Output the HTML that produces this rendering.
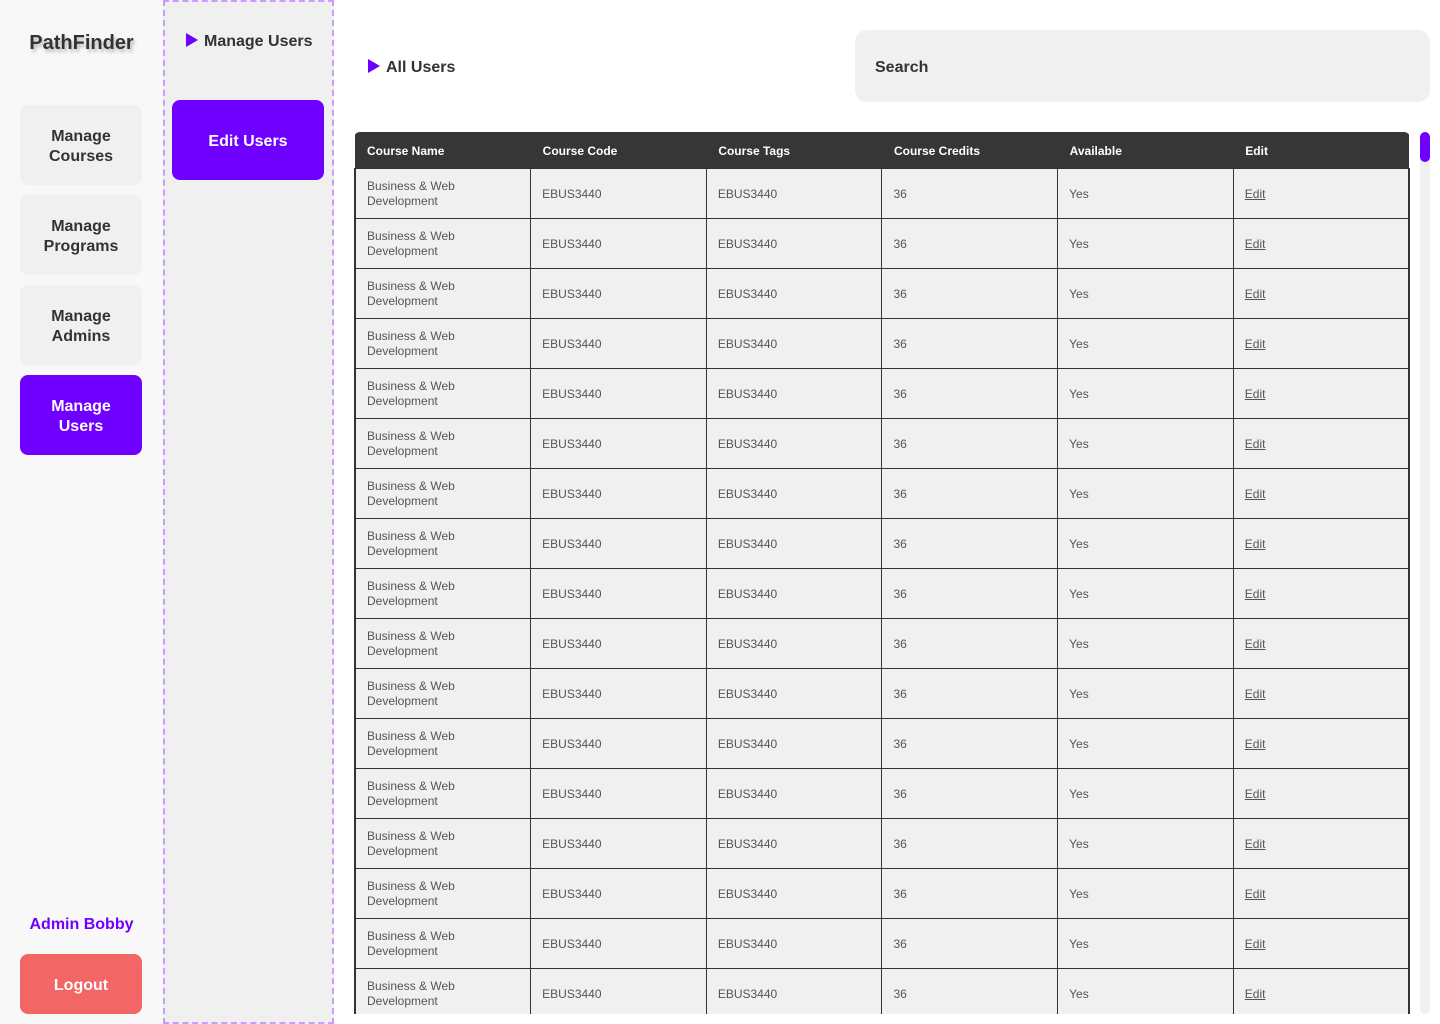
<!DOCTYPE html>
<html><head><meta charset="utf-8"><style>
*{margin:0;padding:0;box-sizing:border-box}
body{width:1440px;height:1024px;overflow:hidden;background:#fff;font-family:"Liberation Sans",sans-serif;color:#333;position:relative}
.side{position:absolute;left:0;top:0;width:163px;height:1024px;background:#f8f8f8}
.logo{position:absolute;left:0;width:163px;top:32px;text-align:center;font-weight:bold;font-size:20px;color:#333;text-shadow:2px 3px 3px rgba(0,0,0,.25)}
.nb{position:absolute;left:20px;width:122px;height:80px;border-radius:8px;background:#f0f0f0;display:flex;align-items:center;justify-content:center;text-align:center;font-weight:bold;font-size:16px;line-height:20px;color:#333;padding-top:3px}
.nb.act{background:#6f00ff;color:#fff}
.admin{position:absolute;left:0;width:163px;top:916px;text-align:center;color:#7000ff;font-weight:bold;font-size:16px}
.logout{position:absolute;left:20px;top:954px;width:122px;height:60px;border-radius:8px;background:#f36666;color:#fff;font-weight:bold;font-size:16px;display:flex;align-items:center;justify-content:center;padding-top:3px}
.panel{position:absolute;left:163px;top:0;width:171px;height:1024px;background:#f0f0f0;border:2px dashed #c99cff}
.tri{display:inline-block;width:0;height:0;border-top:7px solid transparent;border-bottom:7px solid transparent;border-left:12px solid #6f00ff;vertical-align:-1px;margin-right:6px}
.ph{position:absolute;left:186px;top:33px;font-weight:bold;font-size:16px}
.edit{position:absolute;left:172px;top:100px;width:152px;height:80px;border-radius:8px;background:#6f00ff;color:#fff;font-weight:bold;font-size:16px;display:flex;align-items:center;justify-content:center;padding-top:3px}
.all{position:absolute;left:368px;top:59px;font-weight:bold;font-size:16px}
.search{position:absolute;left:855px;top:30px;width:575px;height:72px;border-radius:12px;background:#f0f0f0;font-weight:bold;font-size:16px;padding:29px 20px;color:#333}
.tw{position:absolute;left:354px;top:132px;width:1056px;height:882px;overflow:hidden;border-radius:6px 6px 0 0}
table{border-collapse:collapse;width:1056px;table-layout:fixed}
th{background:#363636;color:#fff;font-size:12px;font-weight:bold;text-align:left;height:36px;padding:2px 12px 0}
td{background:#f0f0f0;border:1px solid #333;height:50px;font-size:12px;color:#555;padding:2px 11px 0;line-height:15px}
tr td:first-child{border-left:2px solid #333}
tr td:last-child{border-right:2px solid #333}
td u{color:#555}
.sb{position:absolute;left:1420px;top:132px;width:10px;height:882px;border-radius:5px;background:#f0f0f0}
.th{position:absolute;left:1420px;top:132px;width:10px;height:30px;border-radius:5px;background:#6f00ff}
</style></head><body>
<div class="side"></div>
<div class="logo">PathFinder</div>
<div class="nb" style="top:105px">Manage<br>Courses</div>
<div class="nb" style="top:195px">Manage<br>Programs</div>
<div class="nb" style="top:285px">Manage<br>Admins</div>
<div class="nb act" style="top:375px">Manage<br>Users</div>
<div class="admin">Admin Bobby</div>
<div class="logout">Logout</div>
<div class="panel"></div>
<div class="ph"><span class="tri"></span>Manage Users</div>
<div class="edit">Edit Users</div>
<div class="all"><span class="tri"></span>All Users</div>
<div class="search">Search</div>
<div class="tw"><table>
<tr><th>Course Name</th><th>Course Code</th><th>Course Tags</th><th>Course Credits</th><th>Available</th><th>Edit</th></tr>
<tr><td>Business &amp; Web<br>Development</td><td>EBUS3440</td><td>EBUS3440</td><td>36</td><td>Yes</td><td><u>Edit</u></td></tr>
<tr><td>Business &amp; Web<br>Development</td><td>EBUS3440</td><td>EBUS3440</td><td>36</td><td>Yes</td><td><u>Edit</u></td></tr>
<tr><td>Business &amp; Web<br>Development</td><td>EBUS3440</td><td>EBUS3440</td><td>36</td><td>Yes</td><td><u>Edit</u></td></tr>
<tr><td>Business &amp; Web<br>Development</td><td>EBUS3440</td><td>EBUS3440</td><td>36</td><td>Yes</td><td><u>Edit</u></td></tr>
<tr><td>Business &amp; Web<br>Development</td><td>EBUS3440</td><td>EBUS3440</td><td>36</td><td>Yes</td><td><u>Edit</u></td></tr>
<tr><td>Business &amp; Web<br>Development</td><td>EBUS3440</td><td>EBUS3440</td><td>36</td><td>Yes</td><td><u>Edit</u></td></tr>
<tr><td>Business &amp; Web<br>Development</td><td>EBUS3440</td><td>EBUS3440</td><td>36</td><td>Yes</td><td><u>Edit</u></td></tr>
<tr><td>Business &amp; Web<br>Development</td><td>EBUS3440</td><td>EBUS3440</td><td>36</td><td>Yes</td><td><u>Edit</u></td></tr>
<tr><td>Business &amp; Web<br>Development</td><td>EBUS3440</td><td>EBUS3440</td><td>36</td><td>Yes</td><td><u>Edit</u></td></tr>
<tr><td>Business &amp; Web<br>Development</td><td>EBUS3440</td><td>EBUS3440</td><td>36</td><td>Yes</td><td><u>Edit</u></td></tr>
<tr><td>Business &amp; Web<br>Development</td><td>EBUS3440</td><td>EBUS3440</td><td>36</td><td>Yes</td><td><u>Edit</u></td></tr>
<tr><td>Business &amp; Web<br>Development</td><td>EBUS3440</td><td>EBUS3440</td><td>36</td><td>Yes</td><td><u>Edit</u></td></tr>
<tr><td>Business &amp; Web<br>Development</td><td>EBUS3440</td><td>EBUS3440</td><td>36</td><td>Yes</td><td><u>Edit</u></td></tr>
<tr><td>Business &amp; Web<br>Development</td><td>EBUS3440</td><td>EBUS3440</td><td>36</td><td>Yes</td><td><u>Edit</u></td></tr>
<tr><td>Business &amp; Web<br>Development</td><td>EBUS3440</td><td>EBUS3440</td><td>36</td><td>Yes</td><td><u>Edit</u></td></tr>
<tr><td>Business &amp; Web<br>Development</td><td>EBUS3440</td><td>EBUS3440</td><td>36</td><td>Yes</td><td><u>Edit</u></td></tr>
<tr><td>Business &amp; Web<br>Development</td><td>EBUS3440</td><td>EBUS3440</td><td>36</td><td>Yes</td><td><u>Edit</u></td></tr>
</table></div>
<div class="sb"></div><div class="th"></div>
</body></html>
